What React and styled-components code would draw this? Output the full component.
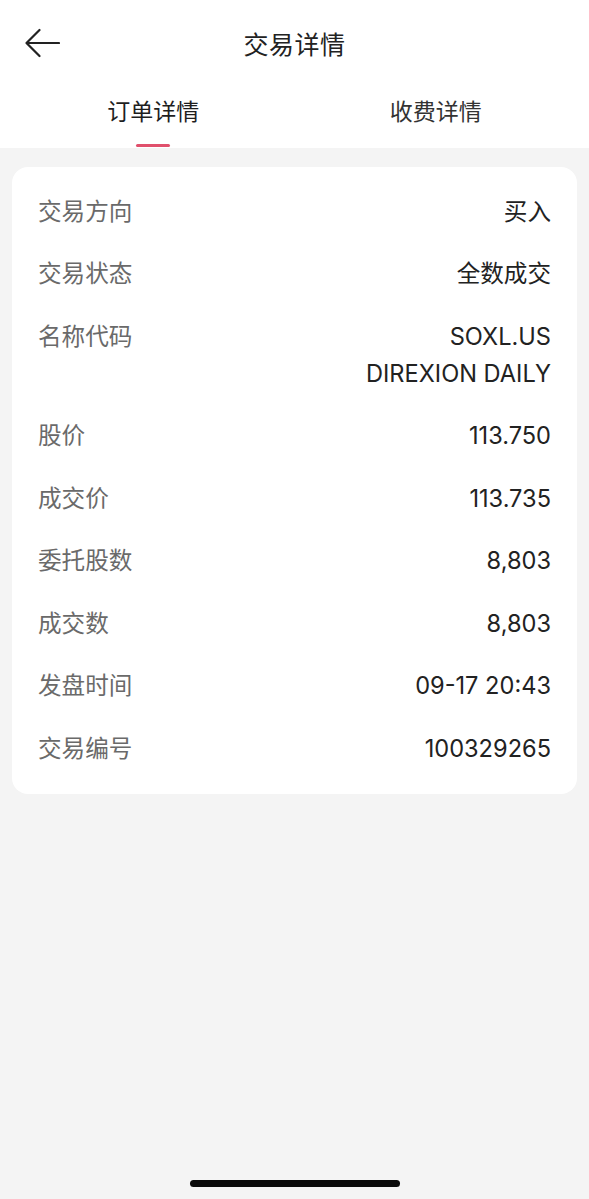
import React, { useState } from "react";
import styled, { createGlobalStyle } from "styled-components";

const GlobalStyle = createGlobalStyle`
  html, body {
    margin: 0;
    padding: 0;
    background: #f4f4f4;
  }
  body {
    font-family: Inter, "Noto Sans CJK SC", "Noto Sans", sans-serif;
    -webkit-font-smoothing: antialiased;
  }
`;

const Page = styled.div`
  min-height: 100vh;
  display: flex;
  flex-direction: column;
  background: #f4f4f4;
`;

const Top = styled.div`
  background: #fff;
`;

const NavBar = styled.div`
  height: 86px;
  display: flex;
  align-items: center;
  justify-content: center;
  position: relative;
`;

const BackButton = styled.button`
  position: absolute;
  left: 22px;
  top: 27px;
  width: 40px;
  height: 32px;
  padding: 0;
  border: 0;
  background: none;
  display: flex;
  align-items: center;
  justify-content: center;
  cursor: pointer;
`;

const Title = styled.div`
  font-size: 25px;
  color: #222;
  letter-spacing: 0.5px;
`;

const Tabs = styled.div`
  display: flex;
  padding: 0 12px;
  height: 62px;
`;

const Tab = styled.div`
  flex: 1;
  display: flex;
  flex-direction: column;
  align-items: center;
  justify-content: space-between;
  padding-top: 12px;
  font-size: 23px;
  line-height: 28px;
  color: ${({ active }) => (active ? "#1e1e1e" : "#333")};
  cursor: pointer;
`;

const Underline = styled.div`
  width: 34px;
  height: 3px;
  margin-bottom: 1px;
  border-radius: 2px;
  background: ${({ active }) => (active ? "#e0506c" : "transparent")};
`;

const Card = styled.div`
  margin: 19px 12px 0;
  background: #fff;
  border-radius: 16px;
  padding: 13px 26px 14px;
`;

const Row = styled.div`
  display: flex;
  justify-content: space-between;
  align-items: flex-start;
  padding: 12.75px 0;
  font-size: 23.6px;
  line-height: 37px;
`;

const Label = styled.div`
  color: #6a6a6a;
`;

const Value = styled.div`
  color: #222;
  text-align: right;
`;

const HomeBar = styled.div`
  margin-top: auto;
  padding: 0 0 12px;
  display: flex;
  justify-content: center;
`;

const HomeIndicator = styled.div`
  width: 210px;
  height: 7px;
  border-radius: 4px;
  background: #0a0a0a;
`;

const rows = [
  { label: "交易方向", value: ["买入"] },
  { label: "交易状态", value: ["全数成交"] },
  { label: "名称代码", value: ["SOXL.US", "DIREXION DAILY"] },
  { label: "股价", value: ["113.750"] },
  { label: "成交价", value: ["113.735"] },
  { label: "委托股数", value: ["8,803"] },
  { label: "成交数", value: ["8,803"] },
  { label: "发盘时间", value: ["09-17 20:43"] },
  { label: "交易编号", value: ["100329265"] },
];

const tabs = ["订单详情", "收费详情"];

export default function App() {
  const [activeTab, setActiveTab] = useState(0);

  return (
    <Page>
      <GlobalStyle />
      <Top>
        <NavBar>
          <BackButton aria-label="back">
            <svg width="36" height="30" viewBox="0 0 36 30" fill="none">
              <path
                d="M35 15H2.5M15.5 2L2.5 15l13 13"
                stroke="#222"
                strokeWidth="2.2"
                strokeLinecap="round"
                strokeLinejoin="round"
              />
            </svg>
          </BackButton>
          <Title>交易详情</Title>
        </NavBar>
        <Tabs>
          {tabs.map((t, i) => (
            <Tab key={t} active={activeTab === i} onClick={() => setActiveTab(i)}>
              {t}
              <Underline active={activeTab === i} />
            </Tab>
          ))}
        </Tabs>
      </Top>

      <Card>
        {rows.map((r) => (
          <Row key={r.label}>
            <Label>{r.label}</Label>
            <Value>
              {r.value.map((v) => (
                <div key={v}>{v}</div>
              ))}
            </Value>
          </Row>
        ))}
      </Card>

      <HomeBar>
        <HomeIndicator />
      </HomeBar>
    </Page>
  );
}
